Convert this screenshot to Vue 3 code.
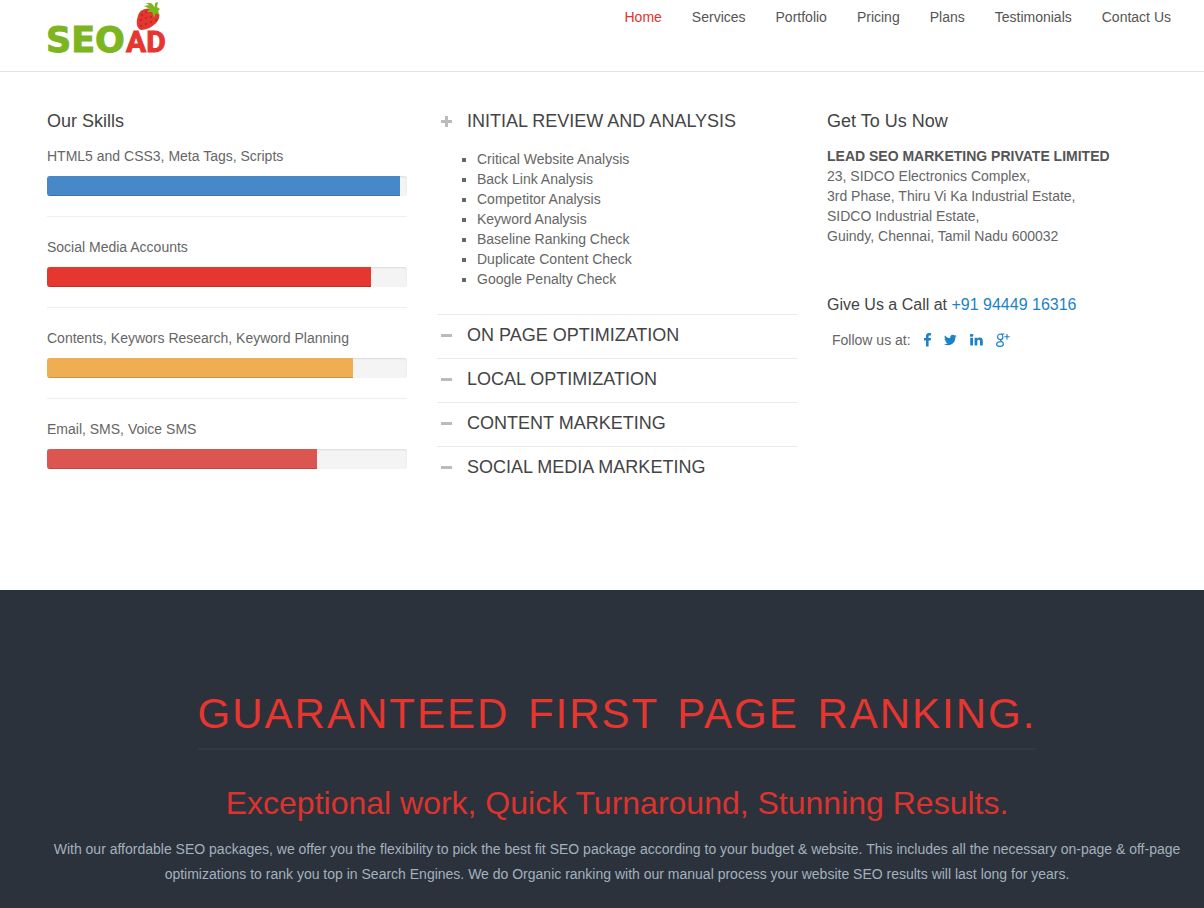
<script setup>
import { ref } from 'vue'

const nav = ['Home', 'Services', 'Portfolio', 'Pricing', 'Plans', 'Testimonials', 'Contact Us']

const skills = [
  { label: 'HTML5 and CSS3, Meta Tags, Scripts', value: 98, tone: 'blue' },
  { label: 'Social Media Accounts', value: 90, tone: 'red' },
  { label: 'Contents, Keywors Research, Keyword Planning', value: 85, tone: 'amber' },
  { label: 'Email, SMS, Voice SMS', value: 75, tone: 'rose' },
]

const topics = [
  {
    title: 'INITIAL REVIEW AND ANALYSIS',
    items: [
      'Critical Website Analysis',
      'Back Link Analysis',
      'Competitor Analysis',
      'Keyword Analysis',
      'Baseline Ranking Check',
      'Duplicate Content Check',
      'Google Penalty Check',
    ],
  },
  { title: 'ON PAGE OPTIMIZATION', items: [] },
  { title: 'LOCAL OPTIMIZATION', items: [] },
  { title: 'CONTENT MARKETING', items: [] },
  { title: 'SOCIAL MEDIA MARKETING', items: [] },
]

const open = ref(0)
</script>

<template>
  <div class="page">
    <header class="header">
      <a href="#" class="logo" aria-label="SEO AD">
        <svg width="122" height="56" viewBox="0 0 122 56">
          <text class="logo-seo" x="-1" y="52">SEO</text>
          <text class="logo-ad" x="79" y="52">AD</text>
          <path d="M91 16C92 10 99 7 106 9C113 11 114 17 110 22C106 27 99 30 94 30C89 28 89 21 91 16Z" fill="#e2362e" />
          <g fill="#8c1f1b">
            <circle cx="95" cy="15" r="0.8" /><circle cx="99" cy="12" r="0.8" />
            <circle cx="94" cy="20" r="0.8" /><circle cx="99" cy="18" r="0.8" />
            <circle cx="104" cy="17" r="0.8" /><circle cx="109" cy="20" r="0.8" />
            <circle cx="94" cy="26" r="0.8" /><circle cx="99" cy="24" r="0.8" />
            <circle cx="104" cy="22" r="0.8" />
          </g>
          <path d="M97 6L102 5L99 3L104 3L108 7L108 3L111 2L110 7L113 9L111 11L113 16L109 13L107 18L105 12L100 12L103 9Z" fill="#7db51f" />
        </svg>
      </a>
      <nav class="nav">
        <a v-for="(item, i) in nav" :key="item" href="#" :class="{ active: i === 0 }">{{ item }}</a>
      </nav>
    </header>

    <main class="columns">
      <section>
        <h3>Our Skills</h3>
        <div v-for="s in skills" :key="s.label" class="skill">
          <p>{{ s.label }}</p>
          <div class="track" role="progressbar" :aria-label="s.label" :aria-valuenow="s.value">
            <div class="bar" :class="s.tone" :style="{ width: s.value + '%' }"></div>
          </div>
        </div>
      </section>

      <section>
        <div v-for="(t, i) in topics" :key="t.title" class="topic">
          <h3>
            <button type="button" class="toggle" :aria-expanded="open === i" @click="open = i">
              <svg width="11" height="11" viewBox="0 0 11 11" aria-hidden="true">
                <path :d="open === i ? 'M0 4H4V0H7V4H11V7H7V11H4V7H0Z' : 'M0 4H11V7H0Z'" fill="#bbb" />
              </svg>
              {{ t.title }}
            </button>
          </h3>
          <ul v-if="open === i && t.items.length">
            <li v-for="x in t.items" :key="x">{{ x }}</li>
          </ul>
        </div>
      </section>

      <section>
        <h3>Get To Us Now</h3>
        <address>
          <strong>LEAD SEO MARKETING PRIVATE LIMITED</strong><br />
          23, SIDCO Electronics Complex,<br />
          3rd Phase, Thiru Vi Ka Industrial Estate,<br />
          SIDCO Industrial Estate,<br />
          Guindy, Chennai, Tamil Nadu 600032
        </address>
        <h4>Give Us a Call at <a href="tel:+919444916316">+91 94449 16316</a></h4>
        <div class="follow">
          <span>Follow us at:</span>
          <a href="#" aria-label="Facebook">
            <svg width="7" height="14" viewBox="0 0 7 14"><path d="M7 .2V2.4H5.7C4.8 2.4 4.6 2.9 4.6 3.5V5H7L6.7 7.4H4.6V13.4H2V7.4H0V5H2V3.2C2 1.2 3.2 0 5.1 0C6 0 6.7 .1 7 .2Z" /></svg>
          </a>
          <a href="#" aria-label="Twitter">
            <svg width="13" height="14" viewBox="0 0 13 14"><path d="M12.6 3.3C12.2 3.8 11.8 4.3 11.3 4.6C11.5 8.6 8.6 12.3 4.1 12.3C2.6 12.3 1.2 11.9 0 11.1C1.4 11.2 2.8 10.9 3.8 10C2.6 10 1.7 9.2 1.4 8.2C1.8 8.3 2.2 8.3 2.6 8.2C1.3 7.9 .5 6.8 .5 5.6C.9 5.8 1.3 5.9 1.7 5.9C.5 5 .2 3.5 .9 2.4C2.2 4 4.1 5 6.2 5.1C5.8 3.4 7.1 1.8 8.8 1.8C9.5 1.8 10.2 2.1 10.7 2.6C11.3 2.5 11.8 2.3 12.3 2C12.1 2.6 11.7 3.1 11.2 3.5C11.7 3.5 12.2 3.4 12.6 3.3Z" /></svg>
          </a>
          <a href="#" aria-label="LinkedIn">
            <svg width="13" height="14" viewBox="0 0 13 14"><path d="M.2 4.8H3V12.6H.2ZM1.6 1A1.4 1.4 0 1 1 1.6 3.7A1.4 1.4 0 1 1 1.6 1ZM4.6 4.8H7.3V5.9C7.7 5.3 8.5 4.6 9.8 4.6C11.6 4.6 12.8 5.7 12.8 8.1V12.6H10V8.4C10 7.4 9.6 6.7 8.7 6.7C7.8 6.7 7.3 7.4 7.3 8.2V12.6H4.6Z" /></svg>
          </a>
          <a href="#" aria-label="Google Plus">
            <svg width="14" height="14" viewBox="0 0 14 14"><g fill="none" stroke="#1c82c8"><path d="M8.4 1H5C3 1 1.6 2.2 1.6 3.9C1.6 5.4 2.7 6.5 4.3 6.5C5.9 6.5 6.9 5.4 6.9 3.9C6.9 2.6 6.1 1.4 5 1M4.6 6.5C4.2 7.2 4.6 7.7 5.4 8.3C6.6 9.1 7.4 9.8 7.4 11C7.4 12.5 6 13.4 4 13.4C2 13.4 .6 12.6 .6 11.2C.6 9.6 2.4 8.7 5.2 8.6" stroke-width="1.2" /><path d="M11 1V6.4M8.3 3.7H13.7" stroke-width="1.1" /></g></svg>
          </a>
        </div>
      </section>
    </main>

    <section class="banner">
      <h1>GUARANTEED FIRST PAGE RANKING.</h1>
      <h2>Exceptional work, Quick Turnaround, Stunning Results.</h2>
      <p>
        With our affordable SEO packages, we offer you the flexibility to pick the best fit SEO package according to
        your budget &amp; website. This includes all the necessary on-page &amp; off-page optimizations to rank you top
        in Search Engines. We do Organic ranking with our manual process your website SEO results will last long for
        years.
      </p>
    </section>
  </div>
</template>

<style>
body {
  margin: 0;
}
</style>

<style scoped>
.page {
  min-height: 100vh;
  display: flex;
  flex-direction: column;
  background: #fff;
  color: #666;
  font: 14px/20px "Liberation Sans", Arial, sans-serif;
}
h1, h2, h3, h4, p, ul {
  margin: 0;
  font-weight: 400;
}
a {
  color: #1c82c8;
  text-decoration: none;
}
.header {
  display: flex;
  justify-content: space-between;
  align-items: flex-start;
  min-height: 71px;
  padding: 0 33px 0 47px;
  border-bottom: 1px solid #e2e2e2;
}
.logo svg {
  display: block;
  overflow: visible;
}
.logo-seo {
  font: bold 35px "DejaVu Sans", sans-serif;
  fill: #7db51f;
  stroke: #7db51f;
  stroke-width: 1px;
}
.logo-ad {
  font: bold 30px Roboto, sans-serif;
  fill: #e7352f;
  stroke: #e7352f;
  stroke-width: 1px;
}
.nav {
  display: flex;
  gap: 30px;
  padding-top: 7px;
}
.nav a {
  color: #555;
}
.nav a.active {
  color: #e4322c;
}
.columns {
  display: grid;
  grid-template-columns: repeat(3, minmax(0, 1fr));
  gap: 30px;
  padding: 39px 17px 113px 47px;
}
h3 {
  color: #444;
  font-size: 18px;
  line-height: 20px;
}
h3 + .skill, address {
  margin-top: 15px;
}
.skill + .skill {
  margin-top: 20px;
  padding-top: 20px;
  border-top: 1px solid #eee;
}
.track {
  height: 20px;
  margin-top: 10px;
  overflow: hidden;
  border-radius: 3px;
  background: #f4f4f4;
  box-shadow: inset 0 1px 2px rgba(0, 0, 0, 0.1);
}
.bar {
  height: 100%;
  box-shadow: inset 0 -1px 0 rgba(0, 0, 0, 0.15);
}
.blue { background: #4788c8; }
.red { background: #e5362f; }
.amber { background: #f0ae53; }
.rose { background: #db5551; }
.topic + .topic {
  margin-top: 13px;
  padding-top: 10px;
  border-top: 1px solid #eaeaea;
}
.topic:first-child {
  margin-bottom: 25px;
}
.toggle {
  display: flex;
  align-items: center;
  gap: 15px;
  padding: 0 0 0 4px;
  border: 0;
  background: none;
  color: inherit;
  font: inherit;
  cursor: pointer;
}
ul {
  margin-top: 18px;
  padding-left: 40px;
  list-style: square;
}
address {
  font-style: normal;
}
strong {
  color: #555;
}
h4 {
  margin-top: 49px;
  color: #444;
  font-size: 16px;
  line-height: 20px;
}
.follow {
  display: flex;
  align-items: center;
  gap: 13px;
  margin-top: 15px;
  padding-left: 5px;
}
.follow svg {
  display: block;
  fill: #1c82c8;
}
.banner {
  flex: 1;
  display: flex;
  flex-direction: column;
  align-items: center;
  padding: 100px 17px 20px 47px;
  background: #2b323b;
  text-align: center;
}
h1 {
  padding-bottom: 10px;
  border-bottom: 2px solid #303b44;
  color: #e7352f;
  font-size: 42px;
  line-height: 48px;
  letter-spacing: 2px;
  word-spacing: 5px;
}
h2 {
  margin-top: 35px;
  color: #dd322d;
  font-size: 32px;
  line-height: 37px;
}
.banner p {
  margin-top: 15px;
  color: #a3b1bf;
  line-height: 25px;
}
</style>
